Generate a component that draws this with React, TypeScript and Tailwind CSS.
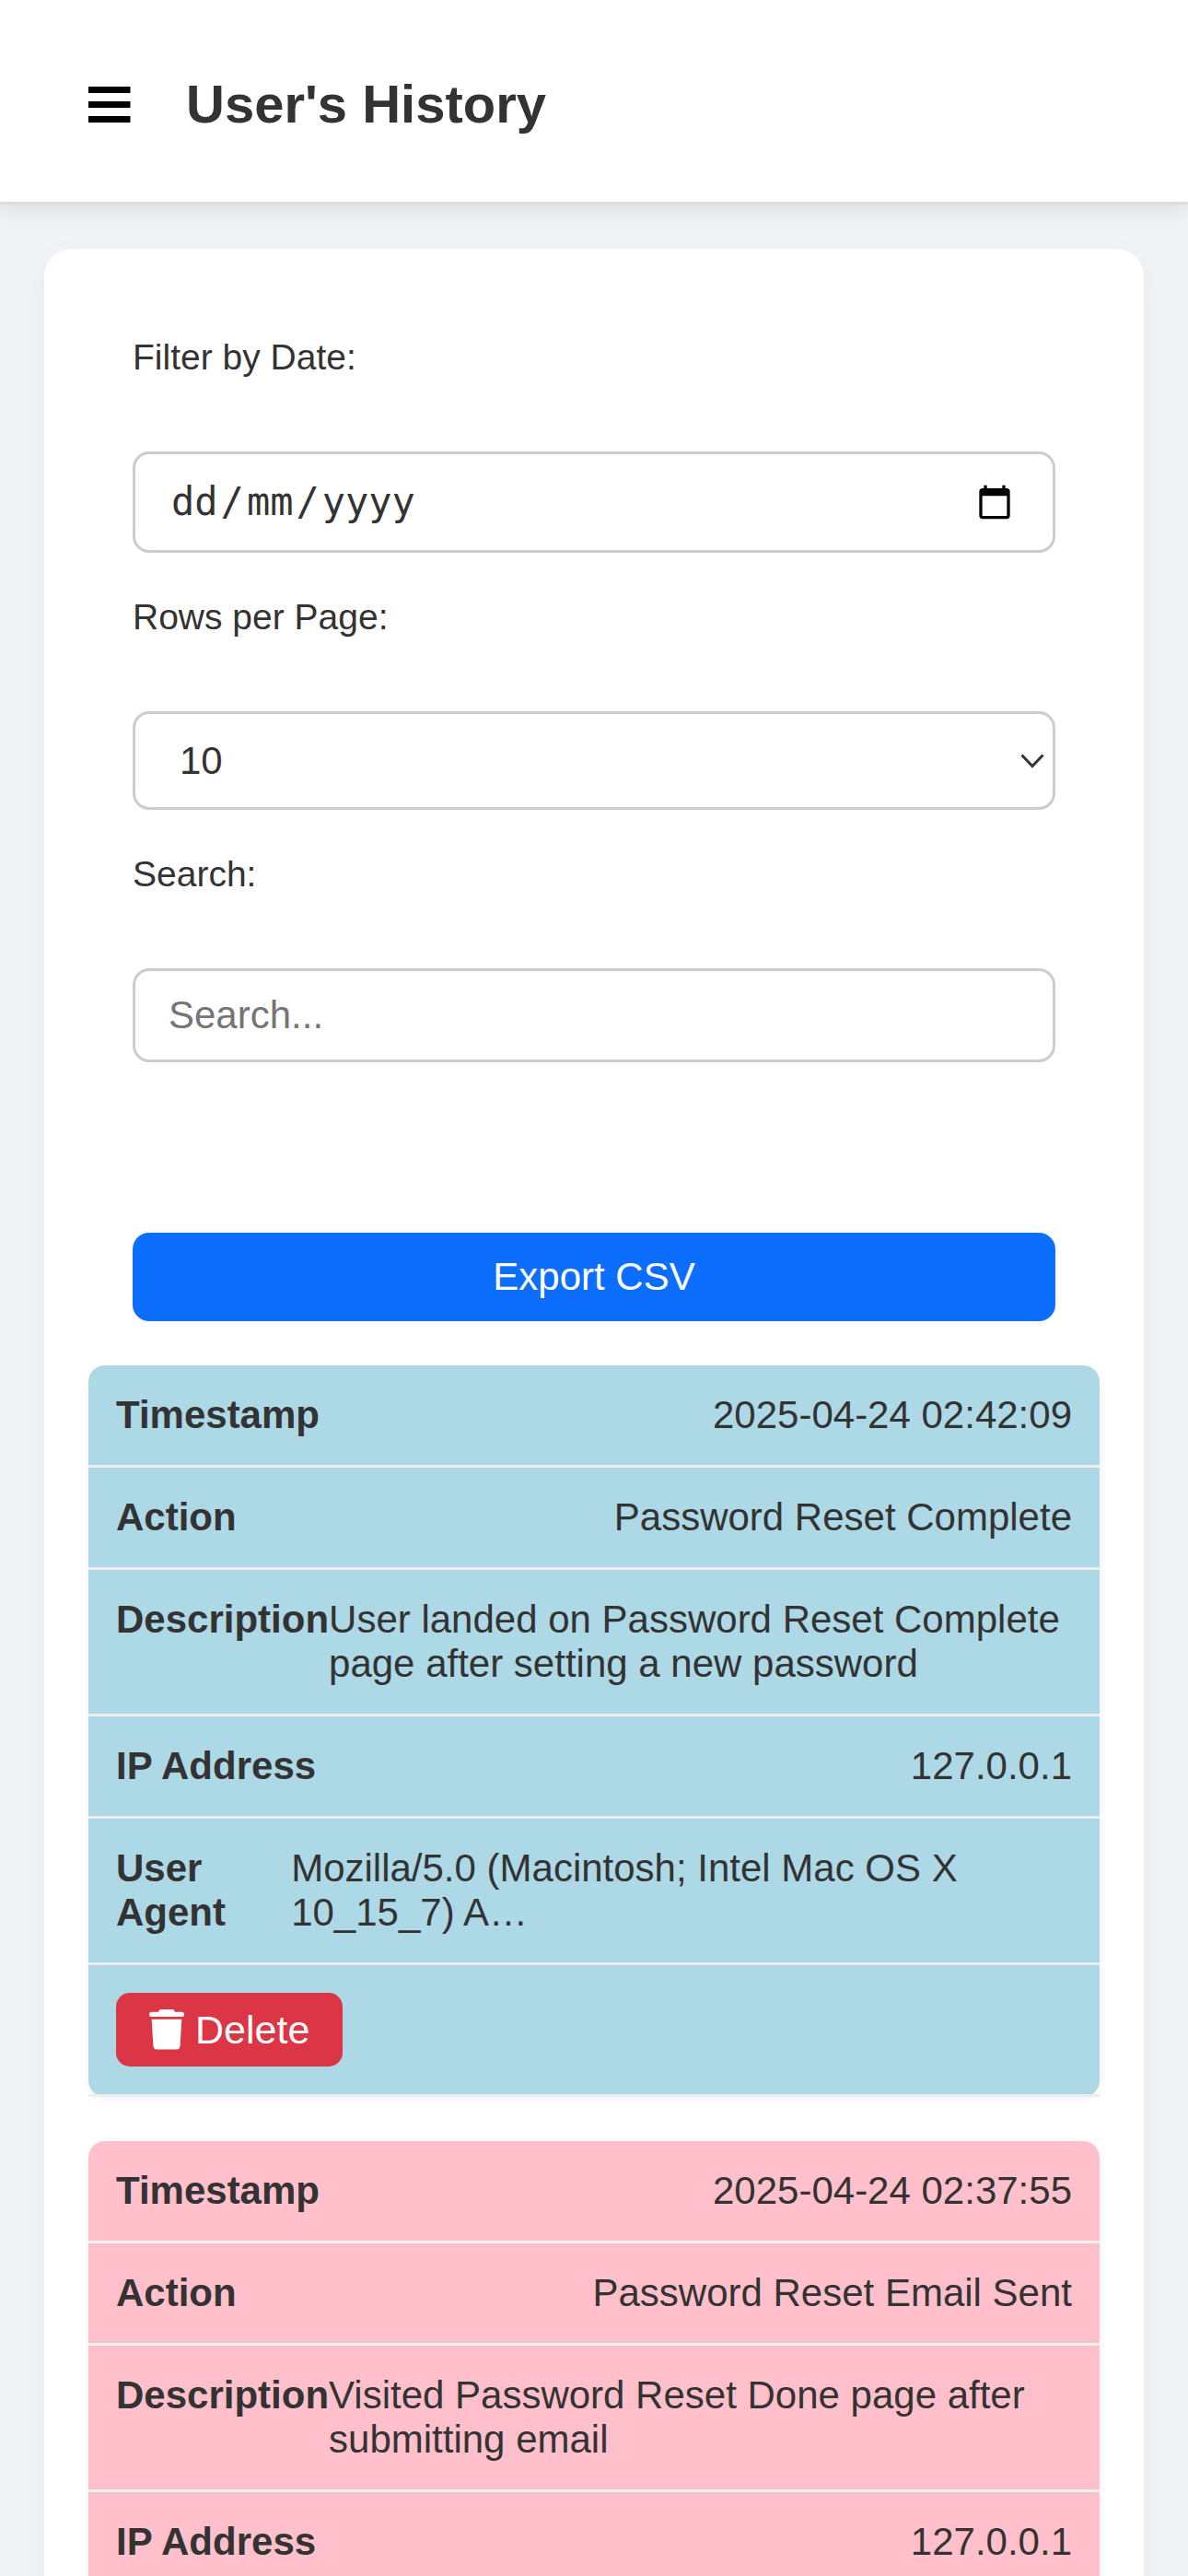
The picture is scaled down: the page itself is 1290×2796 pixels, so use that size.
import React, { useState } from "react";

type Entry = {
  tone: string;
  fields: { label: string; value: string }[];
};

const USER_AGENT = "Mozilla/5.0 (Macintosh; Intel Mac OS X 10_15_7) A…";

const entries: Entry[] = [
  {
    tone: "bg-[#add8e6]",
    fields: [
      { label: "Timestamp", value: "2025-04-24 02:42:09" },
      { label: "Action", value: "Password Reset Complete" },
      {
        label: "Description",
        value: "User landed on Password Reset Complete page after setting a new password",
      },
      { label: "IP Address", value: "127.0.0.1" },
      { label: "User Agent", value: USER_AGENT },
    ],
  },
  {
    tone: "bg-[#ffc0cb]",
    fields: [
      { label: "Timestamp", value: "2025-04-24 02:37:55" },
      { label: "Action", value: "Password Reset Email Sent" },
      {
        label: "Description",
        value: "Visited Password Reset Done page after submitting email",
      },
      { label: "IP Address", value: "127.0.0.1" },
      { label: "User Agent", value: USER_AGENT },
    ],
  },
];

function MenuIcon() {
  return (
    <svg viewBox="0 0 46 39" className="h-[39px] w-[46px]" fill="#000" aria-hidden="true">
      <path d="M0 0h45.500v7H0zM0 16h45.500v7H0zM0 32h45.500v7H0z" />
    </svg>
  );
}

function CalendarIcon() {
  return (
    <svg viewBox="0 0 24 24" className="size-10" fill="#000" aria-hidden="true">
      <path d="M20 3h-1V1h-2v2H7V1H5v2H4c-1.1 0-2 .9-2 2v16c0 1.1.9 2 2 2h16c1.1 0 2-.9 2-2V5c0-1.1-.9-2-2-2zm0 18H4V8h16v13z" />
    </svg>
  );
}

function TrashIcon() {
  return (
    <svg viewBox="0 0 38 44" className="h-11 w-[38px]" fill="#fff" aria-hidden="true">
      <path d="M13 0h12q2.500 0 2.700 2.700h7.600a2.700 2.700 0 0 1 0 5.400H2.700a2.700 2.700 0 0 1 0-5.400h7.600Q10.500 0 13 0z" />
      <path d="M2.700 10.800h32.600l-1.700 28.700q-.3 3.900-4 3.900H8.400q-3.700 0-4-3.900z" />
    </svg>
  );
}

const fieldClass =
  "w-full rounded-[18px] border-[3px] border-[#ccc] bg-white px-9 text-[42px] leading-[48px] text-[#333] outline-none";

function Field({ id, label, children }: { id: string; label: string; children: React.ReactNode }) {
  return (
    <div className="flex flex-col gap-20">
      <label htmlFor={id} className="text-[39px] leading-[44px]">
        {label}
      </label>
      {children}
    </div>
  );
}

function DateField() {
  const [date, setDate] = useState("");
  const edit = date
    ? ""
    : "[&::-webkit-datetime-edit]:opacity-0";
  return (
    <div className="relative">
      <input
        id="date"
        type="date"
        value={date}
        onChange={(e) => setDate(e.target.value)}
        className={`${fieldClass} ${edit} block h-[110px] font-['DejaVu_Sans_Mono',monospace] [&::-webkit-calendar-picker-indicator]:opacity-0`}
      />
      <div className="pointer-events-none absolute inset-0 flex items-center justify-between pr-[46px] pl-[42px] font-['DejaVu_Sans_Mono',monospace] text-[42px]">
        <span className={date ? "invisible" : "flex gap-[3px]"} aria-hidden="true">
          <span>dd</span>
          <span>/</span>
          <span>mm</span>
          <span>/</span>
          <span>yyyy</span>
        </span>
        <CalendarIcon />
      </div>
    </div>
  );
}

function RowsField() {
  return (
    <div className="relative">
      <select id="rows" defaultValue="10" className={`${fieldClass} block h-[107px] appearance-none pl-12`}>
        <option>10</option>
        <option>25</option>
        <option>50</option>
      </select>
      <div className="pointer-events-none absolute inset-0 flex items-center justify-end pr-3">
        <svg viewBox="0 0 26 16" className="h-4 w-[26px]" fill="none" stroke="#333" strokeWidth="3" aria-hidden="true">
          <path d="M1.500 1.500 13 13.500 24.500 1.500" />
        </svg>
      </div>
    </div>
  );
}

function EntryCard({ entry }: { entry: Entry }) {
  return (
    <article className={`rounded-[18px] shadow-[0_3px_12px_rgba(0,0,0,0.05)] ${entry.tone}`}>
      <dl>
        {entry.fields.map((f) => (
          <div key={f.label} className="flex justify-between border-b-[3px] border-[#eee] p-[30px]">
            <dt className="font-bold">{f.label}</dt>
            <dd>{f.value}</dd>
          </div>
        ))}
      </dl>
      <div className="flex border-b-[3px] border-[#eee] p-[30px]">
        <button
          type="button"
          className="flex h-20 items-center gap-3 rounded-[15px] bg-[#dc3545] px-9 text-[43px] text-white"
        >
          <TrashIcon />
          Delete
        </button>
      </div>
    </article>
  );
}

export default function App() {
  return (
    <div className="min-h-screen bg-[#f1f3f7] font-['Liberation_Sans',Arial,sans-serif] text-[42px] leading-[48px] text-[#333]">
      <header className="relative flex items-center gap-[60px] border-b-[3px] border-[#ddd] bg-white px-24 pt-20 pb-[73px] shadow-[0_6px_24px_rgba(0,0,0,0.1)]">
        <button type="button" aria-label="Open menu">
          <MenuIcon />
        </button>
        <h1 className="text-[58px] leading-[66px] font-bold">User's History</h1>
      </header>

      <main className="mx-12 mt-12 rounded-[30px] bg-white p-12 shadow-[0_12px_36px_rgba(0,0,0,0.05)]">
        <form className="flex flex-col gap-12 p-12" onSubmit={(e) => e.preventDefault()}>
          <Field id="date" label="Filter by Date:">
            <DateField />
          </Field>
          <Field id="rows" label="Rows per Page:">
            <RowsField />
          </Field>
          <Field id="search" label="Search:">
            <input
              id="search"
              type="text"
              placeholder="Search..."
              className={`${fieldClass} h-[102px] placeholder:text-[#757575]`}
            />
          </Field>
          <button type="button" className="mt-[137px] h-24 rounded-[18px] bg-[#0d6efd] text-white">
            Export CSV
          </button>
        </form>

        <section className="flex flex-col gap-12" aria-label="History entries">
          {entries.map((entry) => (
            <EntryCard key={entry.fields[0].value} entry={entry} />
          ))}
        </section>
      </main>
    </div>
  );
}
